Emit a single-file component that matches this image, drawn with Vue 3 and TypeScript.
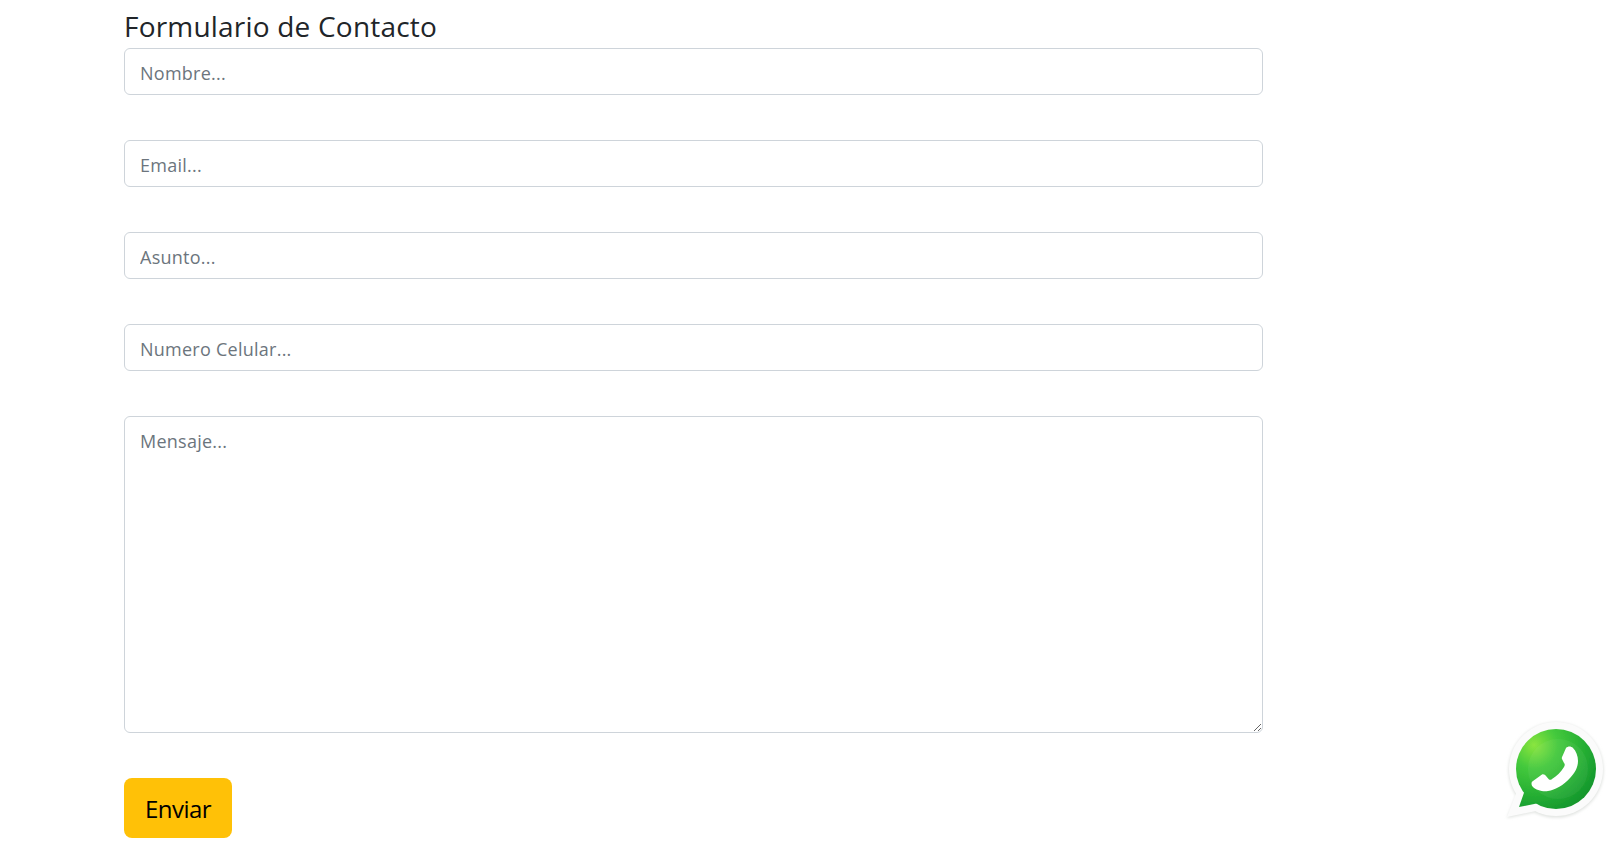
<template>
  <main class="page">
    <h3 class="title">Formulario de Contacto</h3>
    <form class="form" @submit.prevent>
      <input v-for="field in fields" :key="field" class="control" type="text" :placeholder="field" />
      <textarea class="control message" placeholder="Mensaje..."></textarea>
      <button class="send" type="submit">Enviar</button>
    </form>
    <a class="whatsapp" href="#" aria-label="WhatsApp">
      <svg viewBox="0 0 112 110" width="112" height="110">
        <defs>
          <radialGradient id="wa-green" gradientUnits="userSpaceOnUse" cx="34" cy="30" r="78">
            <stop offset="0" stop-color="#8ae53f" />
            <stop offset="0.3" stop-color="#44c93c" />
            <stop offset="0.65" stop-color="#25ae33" />
            <stop offset="1" stop-color="#0e8f2a" />
          </radialGradient>
          <filter id="wa-shadow" x="-10%" y="-10%" width="120%" height="120%">
            <feGaussianBlur stdDeviation="1.5" />
          </filter>
          <filter id="wa-soft" x="-5%" y="-5%" width="110%" height="110%">
            <feGaussianBlur stdDeviation="0.45" />
          </filter>
        </defs>
        <g fill="#dfe2df" filter="url(#wa-shadow)">
          <circle cx="56" cy="55" r="47.500" />
          <path d="M7 103 L18 76 L36 97 Z" />
        </g>
        <g fill="#fbfbfb">
          <circle cx="56" cy="54" r="47" />
          <path d="M7 102 L17 76 L36 96 Z" />
        </g>
        <g filter="url(#wa-soft)">
          <g fill="url(#wa-green)">
            <circle cx="56" cy="54" r="40" />
            <path d="M19 92 L26 72 L39 88 Z" />
          </g>
          <circle cx="58" cy="54" r="30" fill="#ffffff" opacity="0.05" />
          <path
            d="M66 33 C68 31 71 31 73 33 C76 36 78 41 78 46 C78 52 75 58 70 63 C64 70 55 75 48 76 C43 77 36 75 33 72 C31 70 31 67 33 66 L42 59.500 C44 59 45 60 46 61 L49 64.500 C50 65 51 65 52 64 C57 61 61 57 64 52 C65 50 65 49 64 48 L62 44 C61.500 43 62 42 62.500 41 Z"
            fill="#ffffff"
          />
        </g>
      </svg>
    </a>
  </main>
</template>

<script setup lang="ts">
const fields: string[] = ["Nombre...", "Email...", "Asunto...", "Numero Celular..."];
</script>

<style>
html,
body {
  margin: 0;
  background: #fff;
}
</style>

<style scoped>
.page {
  box-sizing: border-box;
  height: 858px;
  padding: 7px 349px 0 124px;
  overflow: hidden;
  font-family: "Open Sans", "Noto Sans", sans-serif;
  color: #212529;
}

.title {
  margin: 0;
  height: 41px;
  font-size: 28px;
  font-weight: 400;
  line-height: 39px;
  letter-spacing: 0.2px;
}

.form {
  display: flex;
  flex-direction: column;
  align-items: flex-start;
  gap: 45px;
}

.control {
  box-sizing: border-box;
  display: block;
  width: 100%;
  height: 47px;
  padding: 10px 15px 8px;
  border: 1px solid #ced4da;
  border-radius: 6px;
  background: #fff;
  color: #212529;
  font-family: inherit;
  font-size: 18px;
  line-height: 27px;
  letter-spacing: 0.25px;
  outline: none;
}

.control::placeholder {
  color: #6c757d;
  opacity: 1;
}

.message {
  height: 317px;
  padding-top: 11px;
}

.send {
  width: 108px;
  height: 60px;
  padding: 0;
  border: 0;
  border-radius: 8px;
  background: #ffc107;
  color: #000;
  font-family: inherit;
  font-size: 24px;
  letter-spacing: -0.5px;
}

.whatsapp {
  position: absolute;
  left: 1500px;
  top: 715px;
  display: block;
  width: 112px;
  height: 110px;
}
</style>
